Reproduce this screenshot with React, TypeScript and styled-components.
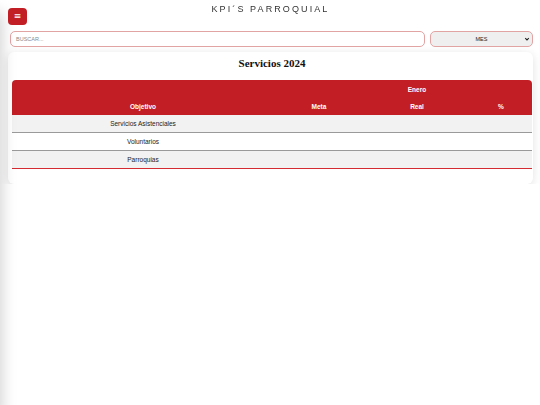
import React from "react";
import styled, { createGlobalStyle } from "styled-components";

const GlobalStyle = createGlobalStyle`
  html, body {
    margin: 0;
    padding: 0;
    background: #ffffff;
    font-family: "Liberation Sans", Arial, sans-serif;
  }
`;

const RED = "#c11f25";

const rows = ["Servicios Asistenciales", "Voluntarios", "Parroquias"];

const App: React.FC = () => {
  return (
    <>
      <GlobalStyle />
      <Sidebar />
      <Page>
        <TopBar>
          <MenuButton>≡</MenuButton>
          <Title>KPI´S PARROQUIAL</Title>
        </TopBar>
        <Filters>
          <Search placeholder="BUSCAR..." />
          <SelectWrap>
            <Select defaultValue="">
              <option value="">MES</option>
            </Select>
            <Chevron viewBox="0 0 10 10">
              <path d="M2 3.5 L5 6.5 L8 3.5" fill="none" stroke="#222" strokeWidth="1.8" />
            </Chevron>
          </SelectWrap>
        </Filters>
        <Card>
          <CardTitle>Servicios 2024</CardTitle>
          <Table>
            <colgroup>
              <col style={{ width: 262 }} />
              <col style={{ width: 90 }} />
              <col style={{ width: 106 }} />
              <col />
            </colgroup>
            <thead>
              <tr>
                <Th colSpan={2} $h={18}></Th>
                <Th $h={18}>Enero</Th>
                <Th $h={18}></Th>
              </tr>
              <tr>
                <Th $h={17}>Objetivo</Th>
                <Th $h={17}>Meta</Th>
                <Th $h={17}>Real</Th>
                <Th $h={17}>%</Th>
              </tr>
            </thead>
            <tbody>
              {rows.map((r, i) => (
                <Row key={r} $odd={i % 2 === 0} $last={i === rows.length - 1}>
                  <Td>{r}</Td>
                  <Td></Td>
                  <Td></Td>
                  <Td></Td>
                </Row>
              ))}
            </tbody>
          </Table>
        </Card>
      </Page>
    </>
  );
};

const Sidebar = styled.aside`
  position: fixed;
  top: 12px;
  left: -200px;
  width: 200px;
  height: 100vh;
  background: #fff;
  box-shadow: 2px 0 14px rgba(0, 0, 0, 0.18);
`;

const Page = styled.div`
  padding: 8px 7px 0 8px;
`;

const TopBar = styled.div`
  position: relative;
  height: 18px;
  display: flex;
  align-items: flex-start;
`;

const MenuButton = styled.button`
  width: 19px;
  height: 17px;
  border: none;
  border-radius: 4px;
  background: ${RED};
  color: #fff;
  font-size: 9px;
  line-height: 17px;
  padding: 0;
  font-family: "DejaVu Sans", sans-serif;
`;

const Title = styled.h1`
  position: absolute;
  left: 0;
  right: 0;
  top: -4px;
  margin: 0;
  text-align: center;
  font-size: 9px;
  font-weight: 400;
  letter-spacing: 2.1px;
  color: #333;
  pointer-events: none;
`;

const Filters = styled.div`
  display: flex;
  align-items: stretch;
  gap: 5px;
  margin-top: 5px;
  padding-left: 2px;
  height: 16px;
`;

const Search = styled.input`
  flex: 1;
  height: 16px;
  box-sizing: border-box;
  border: 1px solid #e2a3a3;
  border-radius: 5px;
  padding: 0 5px;
  font-size: 5.5px;
  font-family: "Liberation Sans", Arial, sans-serif;
  background: #fff;
  &::placeholder {
    color: #8a8a8a;
  }
`;

const SelectWrap = styled.div`
  position: relative;
  width: 103px;
  height: 16px;
`;

const Select = styled.select`
  display: block;
  appearance: none;
  width: 100%;
  height: 16px;
  margin: 0;
  padding: 0;
  box-sizing: border-box;
  border: 1px solid #e2a3a3;
  border-radius: 5px;
  background: #efefef;
  font-size: 5.5px;
  text-align: center;
  text-align-last: center;
  color: #222;
  font-family: "Liberation Sans", Arial, sans-serif;
`;

const Chevron = styled.svg`
  position: absolute;
  right: 3px;
  top: 5px;
  width: 6px;
  height: 6px;
  pointer-events: none;
`;

const Card = styled.div`
  margin-top: 5px;
  background: #fff;
  border-radius: 6px;
  box-shadow: 0 2px 10px rgba(0, 0, 0, 0.12);
  padding: 5px 1px 15px 4px;
`;

const CardTitle = styled.h2`
  margin: 0 0 10px;
  height: 13px;
  line-height: 13px;
  text-align: center;
  font-family: "Liberation Serif", "Times New Roman", serif;
  font-size: 11px;
  font-weight: 700;
  color: #111;
`;

const Table = styled.table`
  width: 100%;
  border-collapse: separate;
  border-spacing: 0;
  table-layout: fixed;
  font-size: 6.5px;

  thead tr:first-child th:first-child {
    border-top-left-radius: 4px;
  }
  thead tr:first-child th:last-child {
    border-top-right-radius: 4px;
  }
`;

const Th = styled.th<{ $h: number }>`
  background: ${RED};
  color: #fff;
  font-weight: 700;
  height: ${(p) => p.$h}px;
  padding: 0;
  text-align: center;
`;

const Row = styled.tr<{ $odd: boolean; $last: boolean }>`
  background: ${(p) => (p.$odd ? "#f2f2f2" : "#ffffff")};
  td {
    border-bottom: 1px solid ${(p) => (p.$last ? "#d42a31" : "#9a9a9a")};
  }
`;

const Td = styled.td`
  height: 17px;
  padding: 0;
  text-align: center;
  color: #222;
`;

export default App;
